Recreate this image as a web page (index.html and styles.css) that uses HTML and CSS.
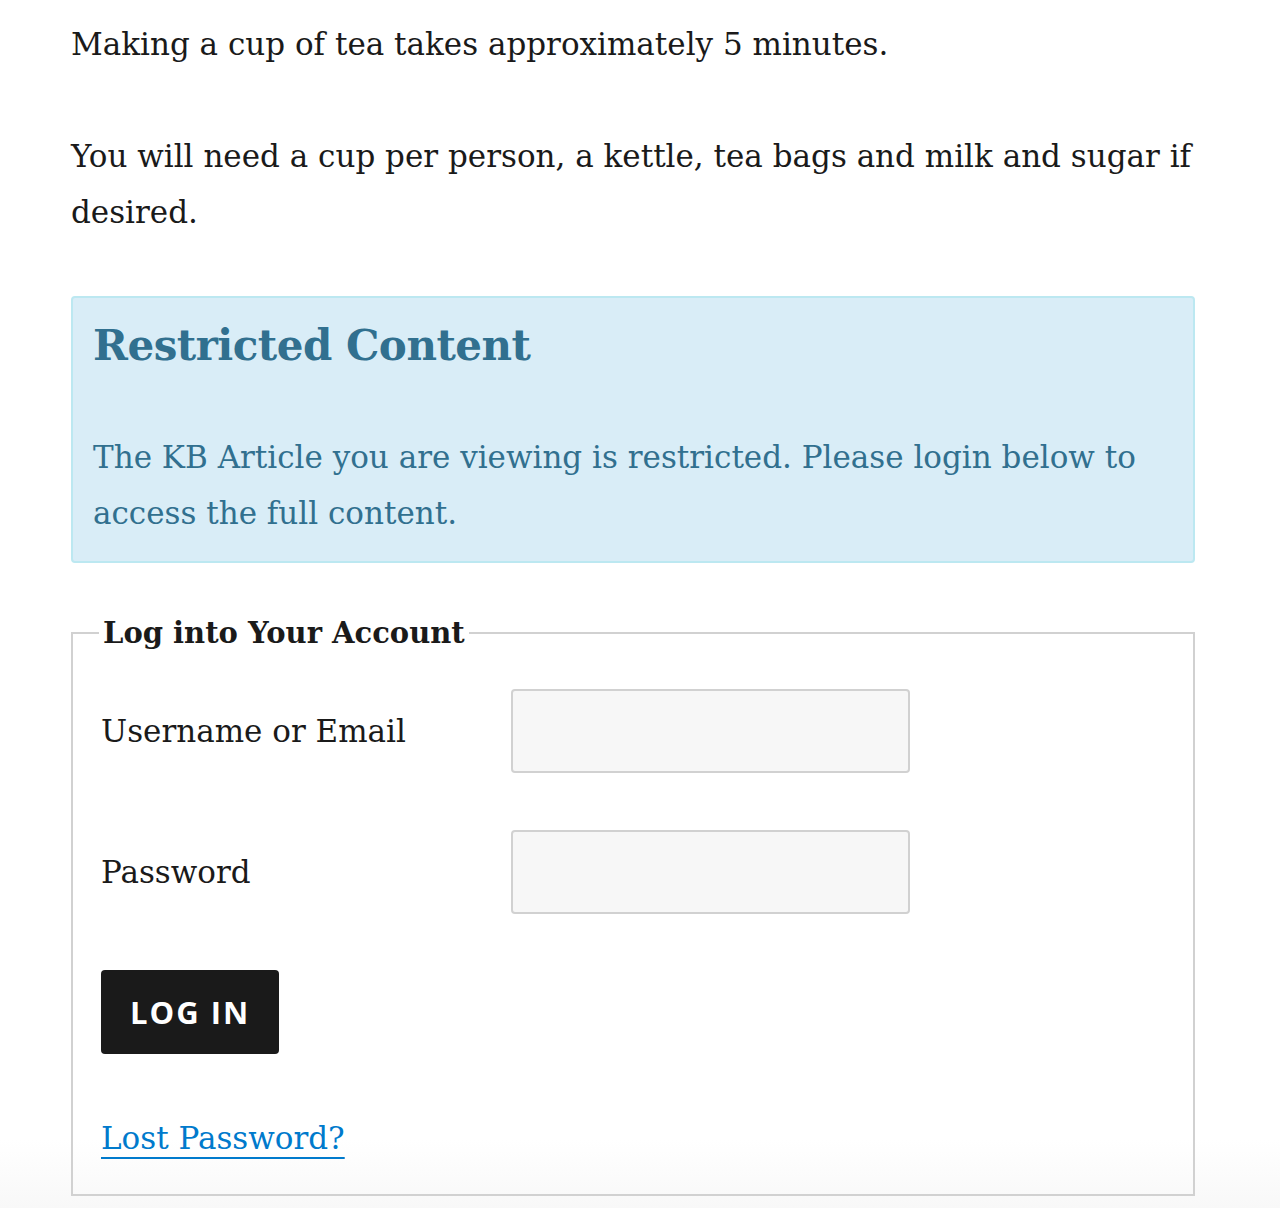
FILE: index.html
```html
<!DOCTYPE html>
<html lang="en">
<head>
    <meta charset="UTF-8">
    <meta name="viewport" content="width=device-width, initial-scale=1.0">
    <title>How to make a cup of tea</title>
    <link rel="stylesheet" href="styles.css">
</head>
<body>
    <div class="entry-content">
        <p>Making a cup of tea takes approximately 5 minutes.</p>
        <p>You will need a cup per person, a kettle, tea bags and milk and sugar if desired.</p>

        <div class="kb-restricted">
            <h3>Restricted Content</h3>
            <p>The KB Article you are viewing is restricted. Please login below to access the full content.</p>
        </div>

        <form class="kb-login" action="#" method="post">
            <fieldset>
                <legend>Log into Your Account</legend>
                <div class="login-row">
                    <label for="user_login">Username or Email</label>
                    <input type="text" id="user_login" name="log">
                </div>
                <div class="login-row">
                    <label for="user_pass">Password</label>
                    <input type="password" id="user_pass" name="pwd">
                </div>
                <button type="submit" class="login-button">Log In</button>
                <p class="lost-password"><a href="#">Lost Password?</a></p>
            </fieldset>
        </form>
    </div>
</body>
</html>
```

FILE: styles.css
```css
html {
    background: linear-gradient(to bottom, #fff 0, #fff 1140px, #f8f8f8 1208px);
    min-height: 1208px;
}

body {
    margin: 0;
    font-family: 'DejaVu Serif', 'Liberation Serif', serif;
    font-size: 31px;
    line-height: 56px;
    color: #1a1a1a;
}

.entry-content {
    width: 1124px;
    margin-left: 71px;
    padding-top: 16px;
}

.entry-content p {
    margin: 0 0 56px;
}

.kb-restricted {
    background-color: #d9edf7;
    border: 2px solid #bce8f1;
    border-radius: 4px;
    color: #31708f;
    padding: 20px;
}

.kb-restricted h3 {
    margin: 0 0 55px;
    font-size: 42px;
    line-height: 56px;
    font-weight: 700;
    letter-spacing: -0.5px;
}

.entry-content .kb-restricted p {
    margin: 0;
}

.kb-login fieldset {
    margin: 42px 0 0;
    padding: 0 28px 28px;
    border: 2px solid #d1d1d1;
}

.kb-login legend {
    font-weight: 700;
    font-size: 29px;
    line-height: 56px;
    padding: 0 4px;
    margin-left: -2px;
}

.login-row {
    display: flex;
    align-items: center;
    margin-top: 28px;
    margin-bottom: 57px;
}

.login-row + .login-row {
    margin-top: 0;
    margin-bottom: 56px;
}

.login-row label {
    width: 410px;
}

.login-row input {
    box-sizing: border-box;
    width: 399px;
    height: 84px;
    background: #f7f7f7;
    border: 2px solid #d1d1d1;
    border-radius: 4px;
    font: inherit;
    padding: 0 14px;
}

.login-button {
    display: block;
    height: 84px;
    padding: 0 29px;
    background-color: #1a1a1a;
    color: #fff;
    border: none;
    border-radius: 4px;
    font-family: 'Open Sans', 'DejaVu Sans', sans-serif;
    font-weight: 700;
    font-size: 31px;
    letter-spacing: 2px;
    text-transform: uppercase;
    cursor: pointer;
}

.entry-content .lost-password {
    margin: 56px 0 0;
}

.lost-password a {
    color: #007acc;
    text-decoration: underline;
    text-decoration-thickness: 2px;
    text-underline-offset: 8px;
}
```
